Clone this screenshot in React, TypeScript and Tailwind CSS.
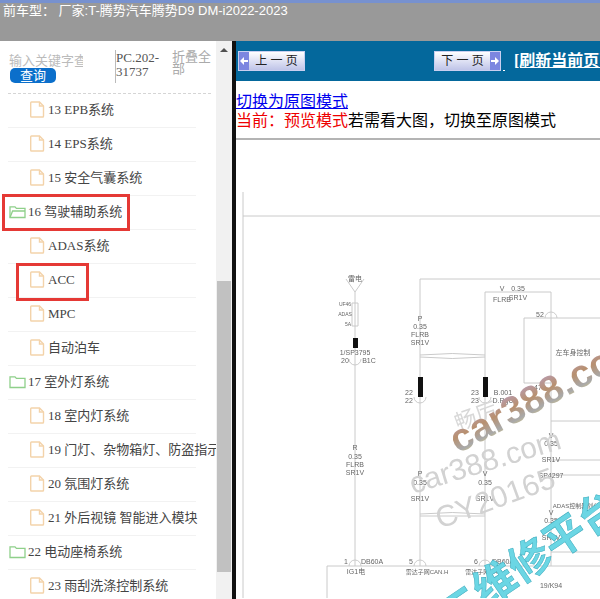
const sans = "font-['Liberation_Sans','Noto_Sans_CJK_SC',sans-serif]";
const serif = "font-['Liberation_Serif','Noto_Sans_CJK_SC',serif]";

type Row = { label: string; folder?: boolean };

const rows: Row[] = [
  { label: "13 EPB系统" },
  { label: "14 EPS系统" },
  { label: "15 安全气囊系统" },
  { label: "16 驾驶辅助系统", folder: true },
  { label: "ADAS系统" },
  { label: "ACC" },
  { label: "MPC" },
  { label: "自动泊车" },
  { label: "17 室外灯系统", folder: true },
  { label: "18 室内灯系统" },
  { label: "19 门灯、杂物箱灯、防盗指示灯" },
  { label: "20 氛围灯系统" },
  { label: "21 外后视镜 智能进入模块" },
  { label: "22 电动座椅系统", folder: true },
  { label: "23 雨刮洗涤控制系统" },
];

function FileIcon() {
  return (
    <svg width="15" height="17" viewBox="0 0 15 17" fill="none" stroke="#f3d3aa" strokeWidth="1.4" className="shrink-0">
      <path d="M1.5 1h8l4 4v10.2a.8.8 0 0 1-.8.8H1.5a.8.8 0 0 1-.8-.8V1.8a.8.8 0 0 1 .8-.8z" />
      <path d="M9.5 1v4h4" />
    </svg>
  );
}

function FolderIcon({ open }: { open?: boolean }) {
  return (
    <svg width="17" height="14" viewBox="0 0 17 14" fill="none" stroke="#8fd08a" strokeWidth="1.3" className="shrink-0">
      <path d="M1 12.5V1.8h5l1.4 1.6H16v9.1z" />
      {open && <path d="M1 12.5l2.6-6.5H16" />}
    </svg>
  );
}

function TreeRow({ row }: { row: Row }) {
  return (
    <div className={`flex h-[34px] w-[188px] items-center whitespace-nowrap border-b border-[#f2f2f2] pb-[2px] text-[13px] text-[#444] ${row.folder ? "pl-px" : "pl-[22px]"}`}>
      {row.folder ? <FolderIcon open={row.label.startsWith("16")} /> : <FileIcon />}
      <span className={row.folder ? "ml-[2px]" : "ml-[3px]"}>{row.label}</span>
    </div>
  );
}

function PageButton({ label, next }: { label: string; next?: boolean }) {
  const arrow = (
    <span className="flex h-full w-[10px] shrink-0 items-center justify-center bg-[#7c86e0]">
      <svg width="8" height="8" viewBox="0 0 8 8" fill="#fff">
        {next ? <path d="M0 3h4V0l4 4-4 4V5H0z" /> : <path d="M8 3H4V0L0 4l4 4V5h4z" />}
      </svg>
    </span>
  );
  return (
    <div className={`flex h-[20px] w-[67px] shrink-0 items-center border border-[#c9cff0] bg-gradient-to-b from-[#ffffff] to-[#bfc4e8] text-[12px] text-[#222] ${sans}`}>
      {!next && arrow}
      <span className="flex-1 whitespace-pre text-center">{label}</span>
      {next && arrow}
    </div>
  );
}

function Diagram() {
  const wire = { stroke: "#cacaca", strokeWidth: 1, fill: "none" };
  const small = { fontSize: 7, fill: "#666", textAnchor: "middle" as const, fontFamily: "'Liberation Sans','Noto Sans CJK SC',sans-serif" };
  return (
    <svg viewBox="0 141 364 458" className="block h-[458px] w-[364px] shrink-0 blur-[0.3px]">
      <g transform="translate(-236 0)">
        <path d="M243 193V599M243 217H600" {...wire} />
        <path d="M346 280L355 293L364 280M355 293V567M352 304H358V327H352Z" {...wire} />
        <path d="M420 378V280H600M485 378V293H551V384M524 319H600M524 319V384H551M551 384V567" {...wire} />
        <path d="M420 398V567M485 398V567M327 599V567H600M551 422H600M551 461H600M551 476H600M551 553H600" {...wire} />
        <path d="M420 358Q452 361 485 358M420 356Q452 353 485 356M420 515Q452 512 485 515M420 517H485" {...wire} />
        <path d="M545 319a6 6 0 0 1 12 0M349 567a6 6 0 0 1 12 0M414 567a6 6 0 0 1 12 0M479 567a6 6 0 0 1 12 0M414 398a6 6 0 0 0 12 0M479 398a6 6 0 0 0 12 0M349 360a6 6 0 0 0 12 0" {...wire} />
        <rect x="353" y="339" width="5" height="10" fill="#111" />
        <rect x="418" y="378" width="5" height="20" fill="#111" />
        <rect x="483" y="378" width="5" height="20" fill="#111" />

        <text x="355" y="282" {...small}>雷电</text>
        <text x="345" y="307" {...small} fontSize={5}>UF46</text>
        <text x="345" y="317" {...small} fontSize={5}>ADAS</text>
        <text x="348" y="327" {...small} fontSize={5}>5A</text>
        <text x="355" y="356" {...small}>1/SP3795</text>
        <text x="345" y="364" {...small}>20</text>
        <text x="369" y="364" {...small}>B1C</text>
        <text x="420" y="322" {...small}>P</text>
        <text x="420" y="330" {...small}>0.35</text>
        <text x="420" y="338" {...small}>FLRB</text>
        <text x="420" y="346" {...small}>SR1V</text>
        <text x="502" y="292" {...small}>V</text>
        <text x="518" y="292" {...small}>0.35</text>
        <text x="502" y="303" {...small}>FLRB</text>
        <text x="518" y="301" {...small}>SR1V</text>
        <text x="540" y="318" {...small}>52</text>
        <text x="573" y="356" {...small}>左车身控制</text>
        <text x="538" y="391" {...small}>47</text>
        <text x="409" y="396" {...small}>22</text>
        <text x="409" y="404" {...small}>22</text>
        <text x="475" y="396" {...small}>23</text>
        <text x="475" y="404" {...small}>23</text>
        <text x="503" y="396" {...small}>B.001</text>
        <text x="503" y="404" {...small}>D.RgU</text>
        <text x="355" y="451" {...small}>R</text>
        <text x="355" y="460" {...small}>0.35</text>
        <text x="355" y="468" {...small}>FLRB</text>
        <text x="355" y="476" {...small}>SR1V</text>
        <text x="420" y="477" {...small}>P</text>
        <text x="420" y="486" {...small}>0.35</text>
        <text x="420" y="502" {...small}>SR1V</text>
        <text x="485" y="477" {...small}>V</text>
        <text x="485" y="486" {...small}>0.35</text>
        <text x="485" y="502" {...small}>SR1V</text>
        <text x="551" y="439" {...small}>V</text>
        <text x="551" y="447" {...small}>0.35</text>
        <text x="551" y="463" {...small}>SR1V</text>
        <text x="551" y="479" {...small}>SP4297</text>
        <text x="576" y="509" {...small} fontSize={6}>ADAS控制器划分</text>
        <text x="551" y="516" {...small}>V</text>
        <text x="551" y="524" {...small}>0.35</text>
        <text x="551" y="541" {...small}>SR1V</text>
        <text x="551" y="589" {...small}>19/K94</text>
        <text x="346" y="565" {...small}>1</text>
        <text x="372" y="565" {...small}>DB60A</text>
        <text x="411" y="565" {...small}>5</text>
        <text x="476" y="565" {...small}>6</text>
        <text x="503" y="565" {...small}>DB60A</text>
        <text x="356" y="575" {...small}>IG1电</text>
        <text x="427" y="575" {...small} fontSize={6}>雷达子网CAN.H</text>
        <text x="486" y="575" {...small} fontSize={6}>雷达子网CAN.L</text>

        <defs>
          <linearGradient id="wm" x1="0" y1="0" x2="0" y2="1">
            <stop offset="0" stopColor="#b9a0c8" />
            <stop offset="0.45" stopColor="#b8906f" />
            <stop offset="0.75" stopColor="#a9a9a9" />
            <stop offset="1" stopColor="#e6d27a" />
          </linearGradient>
        </defs>
        <g fontFamily="'Liberation Sans','Noto Sans CJK SC',sans-serif">
          <text transform="translate(458 432) rotate(-20)" fontSize="22" fill="#d8d8d8">畅厉</text>
          <text transform="translate(413 495) rotate(-17)" fontSize="30" fill="#d2d2d2">car388.com</text>
          <text transform="translate(440 530) rotate(-20)" fontSize="30" fill="#d2d2d2">CY20165</text>
          <text transform="translate(458 455) rotate(-28)" fontSize="39" fontWeight="700" fill="url(#wm)">car388.com</text>
          <text transform="translate(451 632) rotate(-34)" fontSize="42" fontWeight="600" fill="#6bd6e4" stroke="#3aa9bb" strokeWidth="0.5">二维修平台</text>
        </g>
      </g>
    </svg>
  );
}

export default function App() {
  return (
    <div className={`flex h-[599px] w-[600px] flex-col overflow-hidden bg-white ${serif}`}>
      <header className={`h-[41px] shrink-0 border-t-[3px] border-[#7791cf] bg-[#999999] pl-[3px] text-[13px] leading-[15px] text-white ${sans}`}>
        <div className="whitespace-pre">前车型： 厂家:T-腾势汽车腾势D9 DM-i2022-2023</div>
      </header>

      <div className="flex min-h-0 flex-1">
        <aside className="relative flex w-[232px] shrink-0">
          <div className="w-[216px] shrink-0 overflow-hidden pl-[8px]">
            <div className="flex h-[53px] w-[203px] border-b border-dashed border-[#d5d5d5]">
              <div className={`w-[75px] shrink-0 overflow-hidden pl-px pt-[12px] ${sans}`}>
                <div className="whitespace-nowrap text-[13px] leading-[16px] text-[#bbbbbb]">输入关键字查询</div>
                <div className="ml-px mt-[-1px] h-[15px] w-[46px] rounded-[5px] bg-[#0b6fcb] text-center text-[13px] leading-[15px] text-white">查询</div>
              </div>
              <div className="mb-[10px] ml-[32px] mt-[9px] w-[46px] shrink-0 border-l border-[#bbbbbb] pt-px text-[13px] leading-[14px] text-[#555]">PC.202-31737</div>
              <div className={`ml-[11px] w-[40px] shrink-0 pt-[10px] text-[13px] leading-[12px] text-[#aaaaaa] ${sans}`}>折叠全部</div>
            </div>
            {rows.map((row) => (
              <TreeRow key={row.label} row={row} />
            ))}
          </div>
          <div className="flex w-[16px] shrink-0 flex-col bg-[#f1f1f1]">
            <div className="flex h-[240px] justify-center pt-[7px]">
              <div className="h-0 w-0 border-x-[4px] border-b-[4px] border-x-transparent border-b-[#505050]" />
            </div>
            <div className="ml-px h-[291px] w-[14px] bg-[#c1c1c1]" />
          </div>
          <div className="absolute left-[2px] top-[153px] h-[37px] w-[128px] border-[3px] border-[#e53935]" />
          <div className="absolute left-[16px] top-[222px] h-[38px] w-[73px] border-[3px] border-[#e53935]" />
        </aside>

        <div className="w-[4px] shrink-0 bg-[#111]" />

        <main className="flex min-w-0 flex-1 flex-col overflow-hidden">
          <div className="flex h-[40px] shrink-0 items-center whitespace-nowrap bg-[#04689c] pl-[2px]">
            <PageButton label="上 一 页" />
            <div className="ml-[129px] shrink-0">
              <PageButton label="下 一 页" next />
            </div>
            <span className="ml-[2px] mt-[18px] h-px w-[2px] shrink-0 bg-white" />
            <span className={`ml-[9px] shrink-0 text-[16px] font-bold text-white underline ${serif}`}>[刷新当前页面]</span>
          </div>
          <div className={`shrink-0 pt-[11px] text-[16px] leading-[19px] ${serif}`}>
            <div className="text-[#0000ee] underline">切换为原图模式</div>
            <div className="whitespace-nowrap text-black">
              <span className="text-[#ee0000]">当前：预览模式</span>若需看大图，切换至原图模式
            </div>
          </div>
          <hr className="mt-[8px] h-[2px] shrink-0 border-0 bg-[#b4b4b4]" />
          <Diagram />
        </main>
      </div>
    </div>
  );
}
